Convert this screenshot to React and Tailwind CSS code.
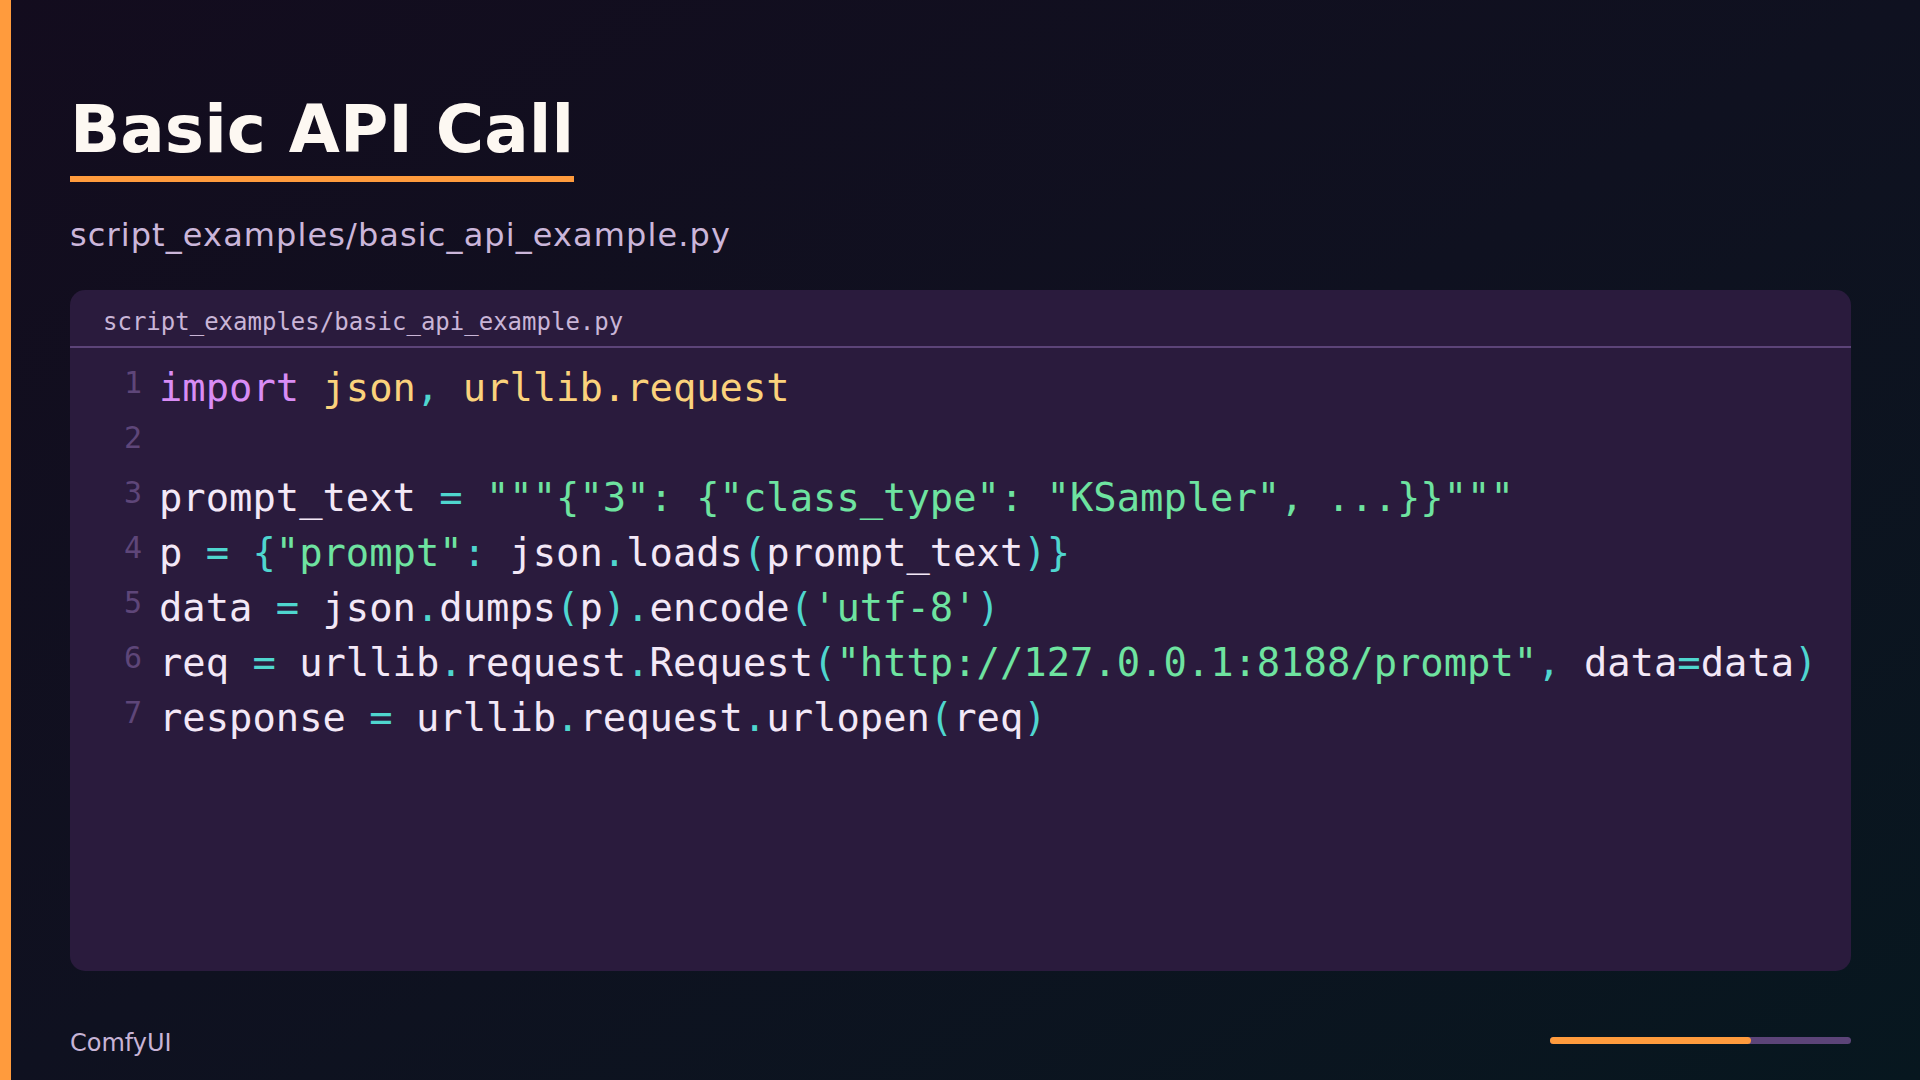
import React from 'react'

const C = {
  kw: 'text-[#d98cf5]',
  mod: 'text-[#fbd27c]',
  op: 'text-[#4fd6cf]',
  str: 'text-[#6ee3a0]',
  id: 'text-[#f3e8f7]',
}

// each line is a list of [text, colour] pieces
const lines = [
  [['import', C.kw], [' '], ['json', C.mod], [',', C.op], [' '], ['urllib.request', C.mod]],
  [],
  [['prompt_text', C.id], [' '], ['=', C.op], [' '], ['"""{"3": {"class_type": "KSampler", ...}}"""', C.str]],
  [['p', C.id], [' '], ['=', C.op], [' '], ['{', C.op], ['"prompt"', C.str], [':', C.op], [' '], ['json', C.id], ['.', C.op], ['loads', C.id], ['(', C.op], ['prompt_text', C.id], [')}', C.op]],
  [['data', C.id], [' '], ['=', C.op], [' '], ['json', C.id], ['.', C.op], ['dumps', C.id], ['(', C.op], ['p', C.id], [').', C.op], ['encode', C.id], ['(', C.op], ["'utf-8'", C.str], [')', C.op]],
  [['req', C.id], [' '], ['=', C.op], [' '], ['urllib', C.id], ['.', C.op], ['request', C.id], ['.', C.op], ['Request', C.id], ['(', C.op], ['"http://127.0.0.1:8188/prompt"', C.str], [',', C.op], [' '], ['data', C.id], ['=', C.op], ['data', C.id], [')', C.op]],
  [['response', C.id], [' '], ['=', C.op], [' '], ['urllib', C.id], ['.', C.op], ['request', C.id], ['.', C.op], ['urlopen', C.id], ['(', C.op], ['req', C.id], [')', C.op]],
]

const sans = "font-['DejaVu_Sans',sans-serif]"
const mono = "font-['DejaVu_Sans_Mono',monospace]"

export default function App() {
  const progress = 2 / 3

  return (
    <div className="flex h-[1080px] w-[1920px] overflow-hidden bg-gradient-to-br from-[#130c1e] via-[#0f1120] to-[#07171f]">
      {/* accent stripe */}
      <div className="w-[11px] shrink-0 bg-[#ff9b3d]" />

      <div className="flex flex-1 flex-col pl-[59px] pr-[69px] pt-[97px]">
        <div>
          <h1 className={`${sans} inline-block border-b-[6px] border-[#ff9b3d] pb-[13px] text-[66px] font-bold leading-none text-[#fdf8f2]`}>
            Basic API Call
          </h1>
        </div>

        <p className={`${sans} mt-[37px] text-[32px] leading-none tracking-[1.1px] text-[#cbb6da]`}>
          script_examples/basic_api_example.py
        </p>

        {/* code panel */}
        <div className="mt-[39px] flex h-[681px] flex-col rounded-[15px] bg-[#2a1b3d]">
          <div className={`${mono} h-[58px] border-b-2 border-[#5c4478] px-[33px] pt-[20px] text-[24px] leading-none text-[#c9b5d7]`}>
            script_examples/basic_api_example.py
          </div>

          <div className={`${mono} flex flex-col pt-[12px]`}>
            {lines.map((parts, i) => (
              <div key={i} className="flex h-[55px] items-start">
                <span className="w-[72px] shrink-0 text-right text-[30px] leading-[46px] text-[#5e4679]">{i + 1}</span>
                <span className="ml-[17px] whitespace-pre text-[38.8px] leading-[55px] text-[#f3e8f7]">
                  {parts.map(([t, c], j) => (
                    <span key={j} className={c}>{t}</span>
                  ))}
                </span>
              </div>
            ))}
          </div>
        </div>

        {/* footer */}
        <div className="mt-[60px] flex items-start justify-between">
          <span className={`${sans} text-[24px] leading-none text-[#c8b4d6]`}>ComfyUI</span>
          <div className="mt-[6px] h-[7px] w-[301px] rounded-full bg-[#5c4478]">
            <div className="h-full rounded-full bg-[#ff9b3d]" style={{ width: `${progress * 100}%` }} />
          </div>
        </div>
      </div>
    </div>
  )
}
